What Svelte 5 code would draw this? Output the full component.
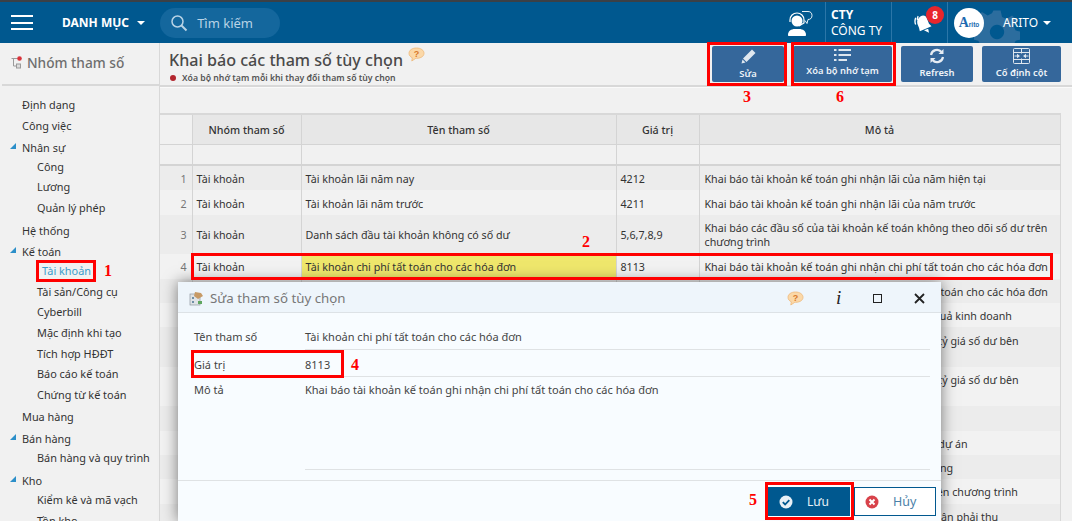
<script>
  const menu = [
    { label: 'Định dạng' },
    { label: 'Công việc' },
    { label: 'Nhân sự', kids: ['Công', 'Lương', 'Quản lý phép'] },
    { label: 'Hệ thống' },
    { label: 'Kế toán', kids: ['Tài khoản', 'Tài sản/Công cụ', 'Cyberbill', 'Mặc định khi tạo', 'Tích hợp HĐĐT', 'Báo cáo kế toán', 'Chứng từ kế toán'] },
    { label: 'Mua hàng' },
    { label: 'Bán hàng', kids: ['Bán hàng và quy trình'] },
    { label: 'Kho', kids: ['Kiểm kê và mã vạch', 'Tồn kho'] }
  ];

  // rows from 5 down sit behind the dialog, only the end of the description shows
  const rows = [
    { n: 1, name: 'Tài khoản lãi năm nay', val: '4212', desc: 'Khai báo tài khoản kế toán ghi nhận lãi của năm hiện tại' },
    { n: 2, name: 'Tài khoản lãi năm trước', val: '4211', desc: 'Khai báo tài khoản kế toán ghi nhận lãi của năm trước' },
    { n: 3, name: 'Danh sách đầu tài khoản không có số dư', val: '5,6,7,8,9', desc: 'Khai báo các đầu số của tài khoản kế toán không theo dõi số dư trên chương trình', tall: true },
    { n: 4, name: 'Tài khoản chi phí tất toán cho các hóa đơn', val: '8113', desc: 'Khai báo tài khoản kế toán ghi nhận chi phí tất toán cho các hóa đơn', active: true },
    { desc: 'Khai báo tài khoản kế toán ghi nhận thu nợ tất toán cho các hóa đơn' },
    { desc: 'Khai báo tài khoản kế toán dùng xác định kết quả kinh doanh' },
    { desc: 'Khai báo tài khoản kế toán xử lý từ chênh lệch tỷ giá số dư bên\nnợ', tall: true },
    { desc: 'Khai báo tài khoản kế toán xử lý từ chênh lệch tỷ giá số dư bên\ncó', tall: true },
    { desc: 'Khai báo tài khoản kế toán ghi nhận tỷ' },
    { desc: 'Khai báo tài khoản kế toán theo dõi các khoản dự án' },
    { desc: 'Khai báo tài khoản kế toán ghi nhận tiền tạm ứng' },
    { desc: 'Khai báo tài khoản kế toán đã được sử dụng trên chương trình' },
    { desc: 'Khai báo tài khoản kế toán hạch toán khoản nhận phải thu' }
  ];
</script>

<div class="page">
  <header class="topbar">
    <button class="burger" aria-label="Menu"><span></span><span></span><span></span></button>
    <div class="catalog">DANH MỤC <i class="caret"></i></div>
    <div class="search">
      <svg width="18" height="18" viewBox="0 0 18 18" fill="none" stroke="#b9d3e6" stroke-width="1.5"><circle cx="7.5" cy="7.5" r="5.5"/><path d="M11.5 11.5 L16.5 16.5" stroke-width="2"/></svg>
      <span>Tìm kiếm</span>
    </div>
    <div class="top-right">
      <svg class="gear" width="46" height="46" viewBox="0 0 64 64" fill="#2c6d9e"><path d="M27 2h10l2 9 6 3 8-5 7 7-5 8 3 6 9 2v10l-9 2-3 6 5 8-7 7-8-5-6 3-2 9H27l-2-9-6-3-8 5-7-7 5-8-3-6-9-2V27l9-2 3-6-5-8 7-7 8 5 6-3z M32 22a10 10 0 1 0 .01 0z" fill-rule="evenodd"/></svg>
      <svg class="agent" width="26" height="26" viewBox="0 0 26 26" fill="none"><path d="M1 25c0-4 3-6 7-6h4c4 0 7 2 7 6 0 .6-.4 1-1 1H2c-.6 0-1-.4-1-1z" fill="#fff"/><circle cx="10" cy="11" r="5.500" fill="#fff"/><path d="M3 12V10c0-4 3-7 7-7s7 3 7 7v3l-5 3" stroke="#fff" stroke-width="1.200"/><path d="M15 1.500h6c2.500 0 4 1.500 4 4s-1.500 4-4 4l-1 4-2-3" stroke="#fff" stroke-width=".9"/></svg>
      <div class="company"><b>CTY</b><span>CÔNG TY</span></div>
      <div class="bell">
        <svg width="20" height="24" viewBox="0 0 24 28" fill="#fff"><path d="M8 7c4-2 7 0 8 4l2 5 3 3-14 6-1-4-2-5c-1-4 1-7 4-9z"/><path d="M12 24l6 3-1-5z"/><path d="M2 9c-1 3-1 6 0 8M5 7C4 9 4 10 4 12" stroke="#fff" stroke-width="1.600" fill="none"/></svg>
        <em>8</em>
      </div>
      <div class="user">
        <div class="avatar"><span>A</span><small>rito</small></div>
        <span class="uname">ARITO</span><i class="caret"></i>
      </div>
    </div>
  </header>

  <div class="main">
    <aside class="sidebar">
      <div class="side-head">
        <svg width="13" height="13" viewBox="0 0 13 13" fill="none" stroke="#9a9a9a"><path d="M1.500 2.500h6M3.500 2.500v7.500h4"/><rect x="6.500" y="8" width="4" height="4" fill="#ddd"/><circle cx="9.500" cy="2.500" r="2.300" fill="#d9323a" stroke="none"/></svg>
        <span>Nhóm tham số</span>
      </div>
      <ul class="tree">
        {#each menu as item}
          <li class:open={item.kids}>
            <div class="node">{item.label}</div>
            {#if item.kids}
              <ul>
                {#each item.kids as kid}
                  <li class="kid" class:current={kid === 'Tài khoản'}>{kid}</li>
                {/each}
              </ul>
            {/if}
          </li>
        {/each}
      </ul>
    </aside>

    <section class="content">
      <div class="head">
        <div class="titles">
          <h1>Khai báo các tham số tùy chọn
            <svg class="help-top" width="17" height="15" viewBox="0 0 17 15"><path d="M8.500 1C4 1 1 3.300 1 6.300c0 2 1.300 3.600 3.300 4.500L3.800 14l4-2.700h.7c4.500 0 7.500-2.100 7.500-5S13 1 8.500 1z" fill="#fbd8a8" stroke="#eeb878" stroke-width=".8"/><text x="8.500" y="9.500" font-size="9" font-weight="700" text-anchor="middle" fill="#d8782a" font-family="Liberation Sans, sans-serif">?</text></svg>
          </h1>
          <p><i></i>Xóa bộ nhớ tạm mỗi khi thay đổi tham số tùy chọn</p>
        </div>
        <div class="tools">
          <button class="tool w-edit">
            <svg width="17" height="17" viewBox="0 0 17 17" fill="#dfe7ef"><path d="M12 1.500l3.500 3.500-9 9-3.500-3.500z"/><path d="M2.500 11.500l3 3L1.500 15.500z"/></svg>
            Sửa
          </button>
          <button class="tool w-clear">
            <svg width="17" height="14" viewBox="0 0 17 14" fill="#dfe7ef"><path d="M0 1h2.500v2H0zM4.500 1H17v2H4.500zM0 6h2.500v2H0zM4.500 6H17v2H4.500zM0 11h2.500v2H0zM4.500 11H13v2H4.500z"/></svg>
            Xóa bộ nhớ tạm
          </button>
          <button class="tool w-refresh">
            <svg width="16" height="16" viewBox="0 0 16 16" fill="none" stroke="#e6ecf3" stroke-width="2.200"><path d="M2 7a6 6 0 0 1 10.500-3"/><path d="M14 9a6 6 0 0 1-10.500 3"/><path d="M14.500 1v5h-5z" fill="#e6ecf3" stroke="none"/><path d="M1.500 15v-5h5z" fill="#e6ecf3" stroke="none"/></svg>
            Refresh
          </button>
          <button class="tool w-fix">
            <svg width="17" height="16" viewBox="0 0 17 16" fill="none" stroke="#dfe7ef"><rect x=".5" y=".5" width="16" height="15" rx="1"/><path d="M.5 4.500h16M.5 11.500h16M8.500 .5v5M8.500 10.500v5"/><path d="M7 8L4 5.800v4.400zM10 8l3-2.200v4.400z" fill="#dfe7ef" stroke="none"/><path d="M1.500 8H4M13 8h2.500"/></svg>
            Cố định cột
          </button>
        </div>
      </div>

      <div class="grid-wrap">
        <table>
          <colgroup><col class="c0" /><col class="c1" /><col class="c2" /><col class="c3" /><col class="c4" /></colgroup>
          <thead>
            <tr class="captions"><th class="idx"></th><th>Nhóm tham số</th><th>Tên tham số</th><th>Giá trị</th><th>Mô tả</th></tr>
            <tr class="filters"><td class="idx"></td><td></td><td></td><td></td><td></td></tr>
          </thead>
          <tbody>
            {#each rows as row}
              <tr class:tall={row.tall}>
                <td class="idx num">{row.n ?? ''}</td>
                <td>Tài khoản</td>
                <td class:picked={row.active}>{row.name ?? ''}</td>
                <td>{row.val ?? ''}</td>
                <td class="desc">{row.desc}</td>
              </tr>
            {/each}
          </tbody>
        </table>
      </div>
    </section>
  </div>

  <div class="dialog">
    <div class="dlg-title">
      <svg width="15" height="15" viewBox="0 0 15 15"><rect x="1" y="3" width="10" height="11" fill="#dfe3e6" stroke="#8e979e" stroke-width=".7"/><path d="M3 6h2v2H3zM3 10h2v2H3z" fill="#6f8fa6"/><path d="M6 1l6 1 2 3-5 3-4-3z" fill="#c79a66"/><path d="M9 10h4v3H9z" fill="#5fa65f"/></svg>
      <span>Sửa tham số tùy chọn</span>
      <div class="dlg-actions">
        <svg width="17" height="15" viewBox="0 0 17 15"><path d="M8.500 1C4 1 1 3.300 1 6.300c0 2 1.300 3.600 3.300 4.500L3.800 14l4-2.700h.7c4.500 0 7.500-2.100 7.500-5S13 1 8.500 1z" fill="#fbd8a8" stroke="#eeb878" stroke-width=".8"/><text x="8.500" y="9.500" font-size="9" font-weight="700" text-anchor="middle" fill="#d8782a" font-family="Liberation Sans, sans-serif">?</text></svg>
        <span class="info">i</span>
        <i class="maxi"></i>
        <svg class="close" width="11" height="11" viewBox="0 0 11 11" stroke="#222" stroke-width="1.800"><path d="M1 1l9 9M10 1l-9 9"/></svg>
      </div>
    </div>
    <div class="dlg-body">
      <div class="field f-name"><label for="f1">Tên tham số</label><div id="f1">Tài khoản chi phí tất toán cho các hóa đơn</div></div>
      <div class="field f-val"><label for="f2">Giá trị</label><div id="f2">8113</div></div>
      <div class="field f-desc"><label for="f3">Mô tả</label><div id="f3">Khai báo tài khoản kế toán ghi nhận chi phí tất toán cho các hóa đơn</div></div>
    </div>
    <div class="dlg-foot">
      <button class="save">
        <svg width="14" height="14" viewBox="0 0 14 14"><circle cx="7" cy="7" r="6.500" fill="#e8f0f6"/><path d="M3.800 7.200l2.300 2.300 4.200-4.400" fill="none" stroke="#00588f" stroke-width="1.800"/></svg>
        <span>Lưu</span>
      </button>
      <button class="cancel">
        <svg width="14" height="14" viewBox="0 0 14 14"><circle cx="7" cy="7" r="6.500" fill="#d8424a"/><path d="M4.500 4.500l5 5M9.500 4.500l-5 5" stroke="#fff" stroke-width="2"/></svg>
        <span>Hủy</span>
      </button>
    </div>
  </div>

  <div class="box b-item"></div>
  <div class="box b-row"></div>
  <div class="box b-edit"></div>
  <div class="box b-clear"></div>
  <div class="box b-val"></div>
  <div class="box b-save"></div>
  <span class="tag t1">1</span>
  <span class="tag t2">2</span>
  <span class="tag t3">3</span>
  <span class="tag t4">4</span>
  <span class="tag t5">5</span>
  <span class="tag t6">6</span>
</div>

<style>
  :global(body) {
    margin: 0;
    background: #f1f1f1;
  }

  .page {
    position: relative;
    width: 1072px;
    height: 521px;
    overflow: hidden;
    display: flex;
    flex-direction: column;
    font-family: "Noto Sans", "Open Sans", sans-serif;
    font-size: 11px;
    color: #333;
    background: #f1f1f1;
  }

  button {
    font-family: inherit;
    cursor: pointer;
  }

  /* top bar */
  .topbar {
    height: 41px;
    flex: none;
    display: flex;
    align-items: center;
    background: #00588f;
    border-top: 2px solid #3b4046;
    color: #fff;
    position: relative;
    overflow: hidden;
  }

  .burger {
    width: 22px;
    height: 15px;
    margin-left: 11px;
    padding: 0;
    border: 0;
    background: none;
    display: flex;
    flex-direction: column;
    justify-content: space-between;
  }

  .burger span {
    height: 2px;
    background: #fff;
  }

  .catalog {
    margin-left: 29px;
    font-size: 12px;
    font-weight: 700;
    white-space: nowrap;
  }

  .caret {
    display: inline-block;
    width: 0;
    height: 0;
    margin-left: 5px;
    vertical-align: 2px;
    border: 4px solid transparent;
    border-top-color: #fff;
    border-bottom: 0;
  }

  .search {
    margin-left: 15px;
    width: 120px;
    height: 30px;
    box-sizing: border-box;
    padding-left: 10px;
    border-radius: 15px;
    background: #14679d;
    display: flex;
    align-items: center;
    gap: 9px;
    color: #b9d3e6;
    font-size: 13px;
  }

  .top-right {
    margin-left: auto;
    height: 100%;
    display: flex;
    align-items: center;
    position: relative;
  }

  .gear {
    position: absolute;
    right: 52px;
    top: 7px;
  }

  .agent {
    margin-right: 12px;
    position: relative;
  }

  .company {
    position: relative;
    width: 67px;
    height: 100%;
    box-sizing: border-box;
    padding-left: 5px;
    border-left: 1px solid #2b76a8;
    border-right: 1px solid #2b76a8;
    display: flex;
    flex-direction: column;
    justify-content: center;
    font-size: 12px;
    line-height: 16px;
  }

  .bell {
    position: relative;
    width: 56px;
    height: 100%;
    box-sizing: border-box;
    padding: 8px 0 0 22px;
    border-right: 1px solid #2b76a8;
  }

  .bell em {
    position: absolute;
    left: 34px;
    top: 4px;
    width: 18px;
    height: 18px;
    border-radius: 50%;
    background: #e8262c;
    color: #fff;
    font-style: normal;
    font-weight: 700;
    font-size: 10px;
    line-height: 18px;
    text-align: center;
  }

  .user {
    position: relative;
    width: 124px;
    display: flex;
    align-items: center;
    padding-left: 6px;
    box-sizing: border-box;
  }

  .avatar {
    width: 30px;
    height: 30px;
    border-radius: 50%;
    background: #fff;
    display: flex;
    align-items: center;
    justify-content: center;
    color: #1e6ab0;
    font-family: "Liberation Serif", serif;
    font-weight: 700;
    font-size: 14px;
  }

  .avatar small {
    font-size: 6.500px;
    font-family: "Liberation Sans", sans-serif;
    margin-top: 3px;
  }

  .uname {
    margin-left: 19px;
    font-size: 12px;
  }

  /* body */
  .main {
    flex: 1;
    min-height: 0;
    display: flex;
  }

  .sidebar {
    width: 160px;
    flex: none;
    box-sizing: border-box;
    border-right: 1px solid #d8d8d8;
    overflow: hidden;
  }

  .side-head {
    height: 43px;
    box-sizing: border-box;
    padding: 0 0 2px 8px;
    margin-left: 2px;
    border-bottom: 2px solid #d8d8d8;
    display: flex;
    align-items: center;
    gap: 4px;
    font-size: 13.700px;
    font-weight: 500;
    color: #6e6e6e;
  }

  .tree,
  .tree ul {
    list-style: none;
    margin: 0;
    padding: 0;
  }

  .tree {
    padding-top: 8px;
    font-size: 10.900px;
    color: #333;
  }

  .tree > li {
    position: relative;
    padding-left: 22px;
  }

  .node {
    height: 21.300px;
    line-height: 21px;
    white-space: nowrap;
  }

  .open > .node::before {
    content: '';
    position: absolute;
    left: 10px;
    top: 6px;
    border-left: 6px solid transparent;
    border-bottom: 6px solid #2c8fc9;
  }

  .kid {
    height: 20.600px;
    line-height: 18px;
    padding-left: 15px;
    white-space: nowrap;
  }

  .kid.current {
    padding-left: 20px;
    color: #3b9ccb;
  }

  .content {
    flex: 1;
    min-width: 0;
    display: flex;
    flex-direction: column;
  }

  .head {
    height: 44px;
    flex: none;
    box-sizing: border-box;
    border-bottom: 2px solid #d8d8d8;
    display: flex;
    justify-content: space-between;
    padding-left: 9px;
  }

  h1 {
    margin: 7px 0 0;
    height: 20px;
    font-size: 16.100px;
    line-height: 20px;
    font-weight: 500;
    color: #4a4a4a;
    white-space: nowrap;
  }

  .help-top {
    vertical-align: middle;
    margin-left: 1px;
    transform: translateY(-7px);
  }

  .titles p {
    margin: 2px 0 0;
    font-size: 8.700px;
    line-height: 12px;
    font-weight: 600;
    color: #555;
    display: flex;
    align-items: center;
  }

  .titles p i {
    width: 6px;
    height: 6px;
    border-radius: 50%;
    background: #b3262e;
    margin: 0 6px 0 1px;
  }

  .tools {
    display: flex;
    gap: 9px;
    padding: 3px 11px 0 0;
  }

  .tool {
    height: 36px;
    padding: 2px 0 0;
    border: 0;
    border-radius: 2px;
    background: #35679b;
    color: #eef3f8;
    font-size: 9.400px;
    font-weight: 600;
    display: flex;
    flex-direction: column;
    align-items: center;
    gap: 2px;
  }

  .w-edit { width: 72px; }
  .w-clear { width: 99px; }
  .w-refresh { width: 72px; }
  .w-fix { width: 79px; }

  .grid-wrap {
    flex: 1;
    min-height: 0;
    padding-top: 25px;
    overflow: hidden;
    border-top: 1px solid #fafafa;
  }

  table {
    table-layout: fixed;
    width: 900px;
    border-collapse: collapse;
    border-top: 2px solid #d8d8d8;
    border-right: 1px solid #d8d8d8;
    font-size: 10.700px;
    color: #333;
  }

  .c0 { width: 32px; }
  .c1 { width: 109px; }
  .c2 { width: 315px; }
  .c3 { width: 83px; }
  .c4 { width: 361px; }

  th {
    height: 29px;
    background: #e7e7e7;
    border-left: 1px solid #d4d4d4;
    border-bottom: 1px solid #d4d4d4;
    font-weight: 500;
    color: #333;
    padding: 0;
  }

  .filters td {
    height: 19px;
    padding: 0;
    background: #f1f1f1;
    border-left: 1px solid #d4d4d4;
    border-bottom: 2px solid #d4d4d4;
  }

  th.idx,
  .filters td.idx {
    background: #f1f1f1;
    border-left: 0;
  }

  tbody td {
    height: 22.400px;
    padding: 2px 4px 0;
    border-left: 1px solid #d4d4d4;
    line-height: 14px;
    vertical-align: middle;
    overflow: hidden;
    white-space: nowrap;
  }

  tbody td.desc {
    padding-left: 5px;
    white-space: pre-line;
  }

  tbody tr:nth-child(odd) td {
    background: #ececec;
  }

  tbody tr:nth-child(even) td {
    background: #f2f2f2;
  }

  tbody tr.tall td {
    height: 37.400px;
  }

  tbody td.idx {
    border-left: 0;
    text-align: right;
    padding-right: 5px;
    color: #777;
  }

  tbody tr td.picked {
    background: #efe76c;
  }

  /* dialog */
  .dialog {
    position: absolute;
    left: 178px;
    top: 282px;
    width: 763px;
    height: 239px;
    background: #f8fcff;
    box-shadow: 0 0 14px rgba(0, 0, 0, 0.5);
    display: flex;
    flex-direction: column;
    color: #444;
    font-size: 11px;
  }

  .dlg-title {
    height: 31px;
    flex: none;
    box-sizing: border-box;
    padding: 2px 0 0 11px;
    background: #eef5fb;
    border-bottom: 1px solid #dde2e6;
    display: flex;
    align-items: center;
    gap: 6px;
    font-size: 13.300px;
    color: #777;
  }

  .dlg-actions {
    margin-left: auto;
    width: 154px;
    padding-right: 16px;
    box-sizing: border-box;
    display: flex;
    align-items: center;
    justify-content: space-between;
  }

  .info {
    font-family: "Liberation Serif", serif;
    font-style: italic;
    font-size: 19px;
    line-height: 18px;
    color: #222;
  }

  .maxi {
    width: 7px;
    height: 7px;
    border: 1px solid #222;
  }

  .dlg-body {
    flex: 1;
    padding: 10px 11px 0 16px;
  }

  .field {
    display: flex;
  }

  .field label {
    width: 111px;
    flex: none;
    padding-top: 6px;
    line-height: 16px;
  }

  .field div {
    flex: 1;
    padding-top: 6px;
    line-height: 16px;
    border-bottom: 1px solid #dfe2e4;
  }

  .f-name div { height: 20px; }
  .f-val label,
  .f-val div { padding-top: 7px; }
  .f-val div { height: 19px; }
  .f-desc label,
  .f-desc div { padding-top: 5px; }
  .f-desc div { height: 87px; }

  .dlg-foot {
    height: 41px;
    flex: none;
    box-sizing: border-box;
    border-top: 1px solid #dfe2e4;
    padding: 6px 5px 0 0;
    display: flex;
    justify-content: flex-end;
    gap: 4px;
  }

  .dlg-foot button {
    height: 29px;
    width: 82px;
    padding: 0 0 0 11px;
    display: flex;
    align-items: center;
    font-size: 12px;
  }

  .dlg-foot span {
    margin-left: 14px;
  }

  .save {
    border: 0;
    background: #00588f;
    color: #e8f0f6;
    outline: 1px solid #fff;
  }

  .cancel {
    border: 1px solid #00588f;
    background: #fff;
    color: #4a7fa8;
  }

  .dlg-foot .cancel {
    padding-left: 10px;
    font-size: 12.500px;
  }

  /* annotations */
  .box {
    position: absolute;
    box-sizing: border-box;
    border: 3px solid #f00;
    pointer-events: none;
  }

  .b-item { left: 36px; top: 260px; width: 60px; height: 22px; }
  .b-row { left: 191px; top: 253px; width: 862px; height: 27px; }
  .b-edit { left: 707px; top: 42px; width: 80px; height: 44px; }
  .b-clear { left: 791px; top: 42px; width: 105px; height: 44px; }
  .b-val { left: 191px; top: 350px; width: 153px; height: 28px; }
  .b-save { left: 765px; top: 482px; width: 89px; height: 38px; }

  .tag {
    position: absolute;
    font-family: "Liberation Serif", serif;
    font-weight: 700;
    font-size: 16px;
    line-height: 18px;
    color: #f00;
  }

  .t1 { left: 104px; top: 262px; }
  .t2 { left: 582px; top: 233px; }
  .t3 { left: 743px; top: 88px; }
  .t4 { left: 351px; top: 356px; }
  .t5 { left: 749px; top: 491px; }
  .t6 { left: 836px; top: 88px; }
</style>
